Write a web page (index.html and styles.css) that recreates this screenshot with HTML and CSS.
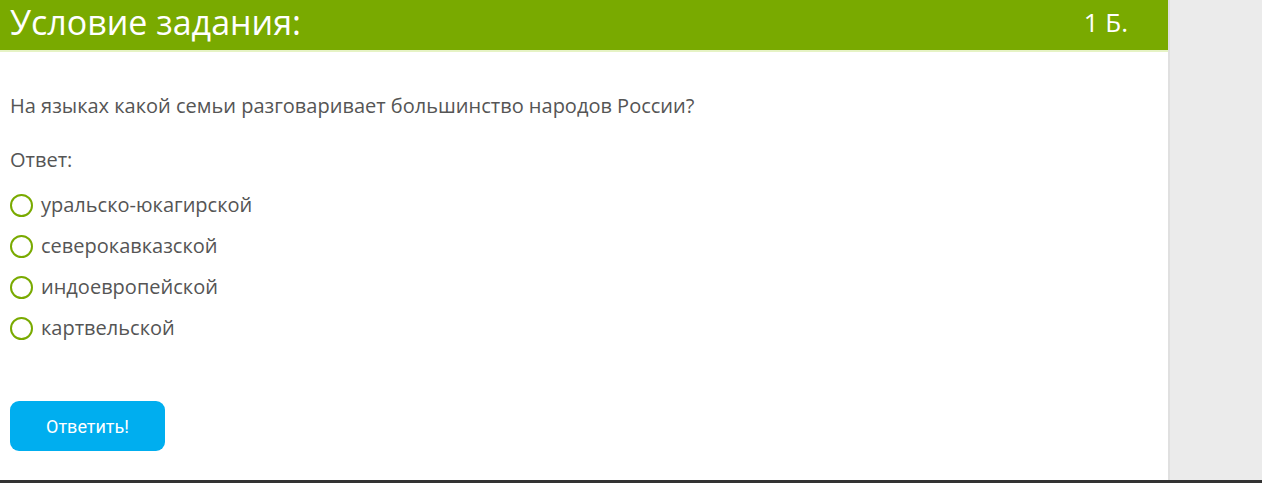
FILE: index.html
```html
<!DOCTYPE html>
<html lang="ru">
<head>
<meta charset="utf-8">
<link rel="stylesheet" href="styles.css">
</head>
<body>
<div class="page">
  <div class="panel">
    <div class="header">
      <h1 class="title">Условие задания:</h1>
      <span class="points">1 Б.</span>
    </div>
    <div class="content">
      <p class="question">На языках какой семьи разговаривает большинство народов России?</p>
      <p class="answer-label">Ответ:</p>
      <ul class="options">
        <li class="option"><span class="radio"></span>уральско-юкагирской</li>
        <li class="option"><span class="radio"></span>северокавказской</li>
        <li class="option"><span class="radio"></span>индоевропейской</li>
        <li class="option"><span class="radio"></span>картвельской</li>
      </ul>
      <button class="submit">Ответить!</button>
    </div>
  </div>
  <div class="side"></div>
</div>
<div class="bottom-bar"></div>
</body>
</html>
```
FILE: styles.css
```css
html, body {
  margin: 0;
  padding: 0;
  height: 100%;
}
body {
  font-family: "Open Sans", "Noto Sans", sans-serif;
  background: #ebebeb;
  overflow: hidden;
  display: flex;
  flex-direction: column;
}
.page {
  display: flex;
  flex: 1;
}
.panel {
  width: 1168px;
  background: #fff;
  display: flex;
  flex-direction: column;
}
.side {
  flex: 1;
  background: #ebebeb;
  border-left: 2px solid #e0e0e0;
}
.header {
  height: 50px;
  background: #79aa00;
  border-bottom: 2px solid #e6f3c5;
  display: flex;
  align-items: center;
  justify-content: space-between;
  padding: 0 40px 0 10px;
  color: #fff;
}
.title {
  margin: 0;
  font-weight: 400;
  font-size: 34px;
  line-height: 40px;
  margin-top: -6px;
}
.points {
  font-size: 26px;
  margin-top: -6px;
}
.content {
  padding: 0 10px;
  color: #555;
  font-size: 20px;
}
.question {
  margin: 41px 0 0;
  line-height: 26px;
}
.answer-label {
  margin: 28px 0 0;
  line-height: 26px;
}
.options {
  list-style: none;
  margin: 19px 0 0;
  padding: 0;
  display: flex;
  flex-direction: column;
  gap: 15px;
}
.option {
  display: flex;
  align-items: center;
  line-height: 26px;
  gap: 8px;
}
.radio {
  width: 19px;
  height: 19px;
  border: 2.5px solid #79aa00;
  border-radius: 50%;
  box-sizing: content-box;
}
.submit {
  margin-top: 60px;
  width: 155px;
  height: 50px;
  border: none;
  border-radius: 9px;
  background: #00aeef;
  color: #fff;
  font-family: Roboto, "Liberation Sans", sans-serif;
  font-size: 18px;
  padding: 0;
}
.bottom-bar {
  height: 3px;
  background: #333;
}
```
